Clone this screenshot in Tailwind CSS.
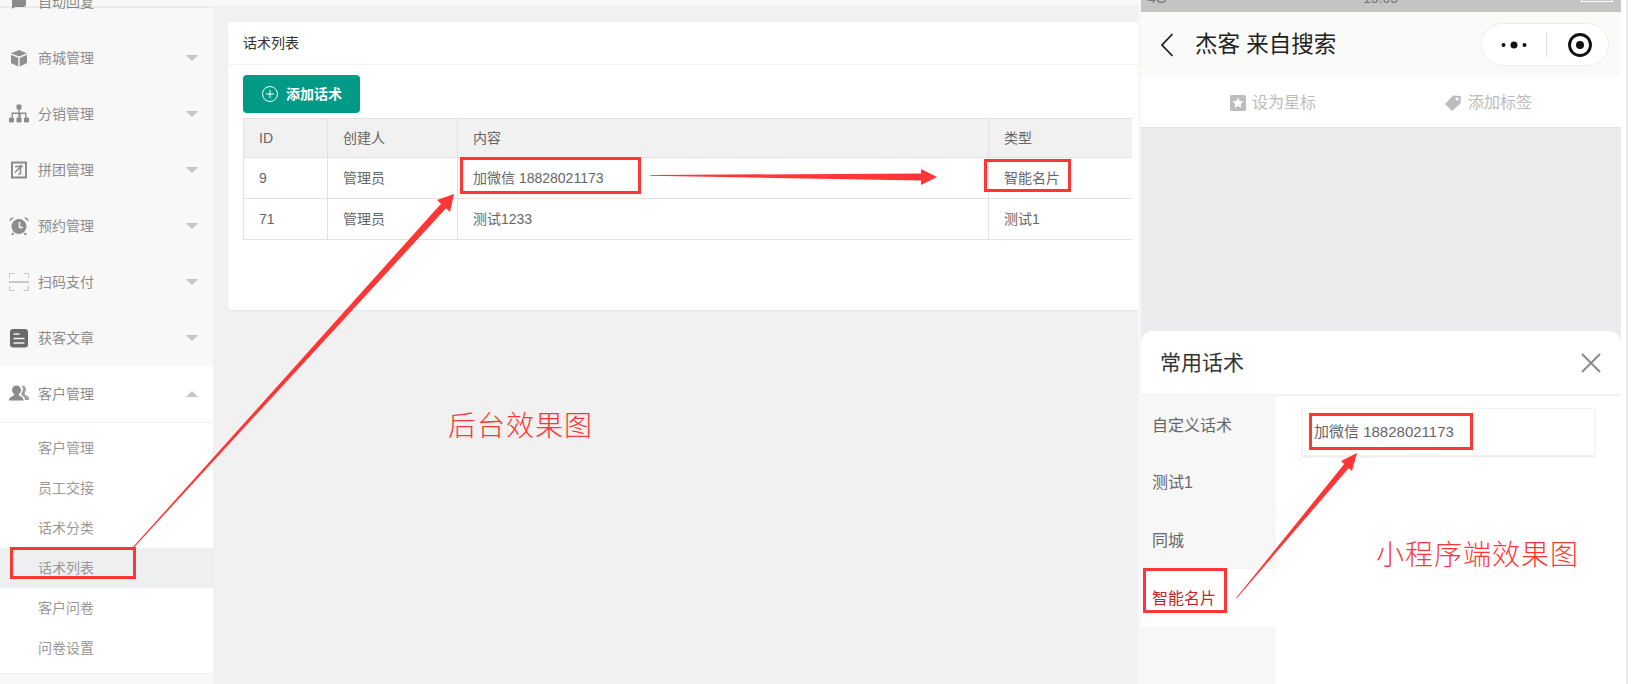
<!DOCTYPE html>
<html lang="zh-CN">
<head>
    <meta charset="UTF-8">
    <title>话术列表</title>
    <script src="https://cdn.jsdelivr.net/npm/@tailwindcss/browser@4"></script>
</head>
<body class="bg-white font-['Liberation_Sans','Noto_Sans_CJK_SC',sans-serif]">
<div class="relative flex h-[684px] w-[1633px] overflow-hidden">

    <!-- Sidebar -->
    <aside class="relative h-full w-[213px] shrink-0 overflow-hidden bg-[#f8f8f8] text-sm text-[#8c8c8c]">
        <div class="mt-[-26px] flex h-14 items-center pl-[9px]">
            <svg class="mr-[9px] h-5 w-5" viewBox="0 0 20 20"><path d="M3 4h14v8a3 3 0 0 1-3 3H6l-3 2z" fill="#8c8c8c"/></svg>
            <span>自动回复</span>
        </div>
        <div class="flex h-14 items-center pl-[9px]">
            <svg class="mr-[9px] h-5 w-5" viewBox="0 0 20 20"><path d="M10 2l8 3.200-8 3.400-8-3.400z" fill="#909090"/><path d="M2 6.800l7.300 3.100V18.500L2 15z" fill="#909090"/><path d="M18 6.800l-7.300 3.100V18.500L18 15z" fill="#909090"/></svg>
            <span>商城管理</span>
            <i class="mr-[15px] ml-auto h-0 w-0 border-x-[6px] border-t-[6px] border-x-transparent border-t-[#c4c4c4]"></i>
        </div>
        <div class="flex h-14 items-center pl-[9px]">
            <svg class="mr-[9px] h-5 w-5" viewBox="0 0 20 20" fill="#8c8c8c"><rect x="7.500" y="0.500" width="5" height="5" rx="1"/><rect x="0" y="13.500" width="5" height="5" rx="1"/><rect x="7.500" y="13.500" width="5" height="5" rx="1"/><rect x="15" y="13.500" width="5" height="5" rx="1"/><path d="M9.300 5h1.400v3.500h6.800v5h-1.400V10h-4.400v3.500H9.300V10H3.900v3.500H2.500v-5h6.800z"/></svg>
            <span>分销管理</span>
            <i class="mr-[15px] ml-auto h-0 w-0 border-x-[6px] border-t-[6px] border-x-transparent border-t-[#c4c4c4]"></i>
        </div>
        <div class="flex h-14 items-center pl-[9px]">
            <svg class="mr-[9px] h-5 w-5" viewBox="0 0 20 20" fill="none" stroke="#8c8c8c"><rect x="3" y="2.500" width="14" height="15" stroke-width="2"/><path d="M6 6.500h8M11.500 4.500v9l-2 1M11 7.500l-5 5" stroke-width="1.500"/></svg>
            <span>拼团管理</span>
            <i class="mr-[15px] ml-auto h-0 w-0 border-x-[6px] border-t-[6px] border-x-transparent border-t-[#c4c4c4]"></i>
        </div>
        <div class="flex h-14 items-center pl-[9px]">
            <svg class="mr-[9px] h-5 w-5" viewBox="0 0 20 20"><circle cx="10" cy="10.500" r="7.500" fill="#8c8c8c"/><path d="M0.500 5.500a3.500 3.500 0 0 1 4.500-3.800zM19.500 5.500a3.500 3.500 0 0 0-4.500-3.800z" fill="#8c8c8c"/><path d="M4.500 17l-1.500 2M15.500 17l1.500 2" stroke="#8c8c8c" stroke-width="2"/><path d="M10.500 6v5.500H14" fill="none" stroke="#f8f8f8" stroke-width="1.500"/></svg>
            <span>预约管理</span>
            <i class="mr-[15px] ml-auto h-0 w-0 border-x-[6px] border-t-[6px] border-x-transparent border-t-[#c4c4c4]"></i>
        </div>
        <div class="flex h-14 items-center pl-[9px]">
            <svg class="mr-[9px] h-5 w-5" viewBox="0 0 20 20" fill="none" stroke="#c4c4c4"><path d="M0.500 6V1.500h5M14.500 1.500h5V6M0.500 14v4.500h5M14.500 18.500h5V14"/><path d="M0 10h20" stroke="#a8a8a8" stroke-width="1.200"/></svg>
            <span>扫码支付</span>
            <i class="mr-[15px] ml-auto h-0 w-0 border-x-[6px] border-t-[6px] border-x-transparent border-t-[#c4c4c4]"></i>
        </div>
        <div class="flex h-14 items-center pl-[9px]">
            <svg class="mr-[9px] h-5 w-5" viewBox="0 0 20 20"><rect x="1" y="1" width="18" height="18.500" rx="3" fill="#6b6b6b"/><path d="M4.500 6h6M4.500 10.500h11M4.500 15h11" stroke="#f4f4f4" stroke-width="1.600"/></svg>
            <span>获客文章</span>
            <i class="mr-[15px] ml-auto h-0 w-0 border-x-[6px] border-t-[6px] border-x-transparent border-t-[#c4c4c4]"></i>
        </div>
        <div class="flex h-14 items-center bg-white pl-[9px]">
            <svg class="mr-[9px] h-5 w-5" viewBox="0 0 20 20" fill="#8c8c8c"><path d="M13 1.500a4 4 0 0 1 3 6.800c-.7 1-.5 2 .5 2.700l2.500 1.500c1 .7 1 2 1 3.500h-4c0-2-1-3.200-3-4.500-1-.7-1-2-.3-3a6 6 0 0 0 0-7z" fill="#a0a0a0"/><circle cx="7.500" cy="6" r="4.500"/><path d="M5.500 10h4c.2 1 .6 1.600 2 2.300 2 1 3 2 3 4.200H0c0-2.200 1-3.200 3.500-4.200 1.400-.7 1.800-1.300 2-2.300z"/></svg>
            <span>客户管理</span>
            <i class="mr-[15px] ml-auto h-0 w-0 border-x-[6px] border-b-[6px] border-x-transparent border-b-[#c4c4c4]"></i>
        </div>
        <ul class="border-y border-[#eeeeee] bg-white py-[5px] text-[#999999]">
            <li class="flex h-10 items-center pl-[38px]">客户管理</li>
            <li class="flex h-10 items-center pl-[38px]">员工交接</li>
            <li class="flex h-10 items-center pl-[38px]">话术分类</li>
            <li class="flex h-10 items-center bg-[#eeeff1] pl-[38px]">话术列表</li>
            <li class="flex h-10 items-center pl-[38px]">客户问卷</li>
            <li class="flex h-10 items-center pl-[38px]">问卷设置</li>
        </ul>
        <div class="absolute top-[6px] left-0 h-[2px] w-full bg-black/5"></div>
    </aside>

    <!-- Main content -->
    <main class="w-[925px] shrink-0 overflow-hidden bg-[#f1f1f1]">
        <div class="h-[7px] border-b border-[#eeeeee] bg-[#f7f7f7]"></div>
        <section class="mt-[15px] ml-[15px] h-[288px] w-[910px] rounded-t-sm rounded-bl-sm bg-white shadow-[0_1px_2px_rgba(0,0,0,0.05)]">
            <div class="flex h-[43px] items-center border-b border-[#f4f4f4] pl-[15px] text-sm text-[#333333]">话术列表</div>
            <div class="pt-[10px] pr-[5px] pl-[15px]">
                <button class="flex h-[38px] w-[117px] items-center rounded-sm bg-[#009a87] pl-[19px] text-sm font-bold text-white">
                    <svg class="mr-2 h-4 w-4" viewBox="0 0 16 16" fill="none" stroke="#ffffff" stroke-width="1"><circle cx="8" cy="8" r="7.500"/><path d="M8 4v8M4 8h8"/></svg>
                    添加话术
                </button>
                <table class="mt-[5px] w-[889px] table-fixed border-collapse text-sm text-[#666666]">
                    <colgroup>
                        <col class="w-[84px]"><col class="w-[130px]"><col class="w-[531px]"><col>
                    </colgroup>
                    <thead>
                        <tr class="h-[39px] bg-[#f1f1f1] text-left">
                            <th class="border border-[#e2e2e2] pl-[15px] font-normal">ID</th>
                            <th class="border border-[#e2e2e2] pl-[15px] font-normal">创建人</th>
                            <th class="border border-[#e2e2e2] pl-[15px] font-normal">内容</th>
                            <th class="border border-r-0 border-[#e2e2e2] pl-[15px] font-normal">类型</th>
                        </tr>
                    </thead>
                    <tbody>
                        <tr class="h-[41px]">
                            <td class="border border-[#e2e2e2] pl-[15px]">9</td>
                            <td class="border border-[#e2e2e2] pl-[15px]">管理员</td>
                            <td class="border border-[#e2e2e2] pl-[15px]">加微信 18828021173</td>
                            <td class="border border-r-0 border-[#e2e2e2] pl-[15px]">智能名片</td>
                        </tr>
                        <tr class="h-[41px]">
                            <td class="border border-[#e2e2e2] pl-[15px]">71</td>
                            <td class="border border-[#e2e2e2] pl-[15px]">管理员</td>
                            <td class="border border-[#e2e2e2] pl-[15px]">测试1233</td>
                            <td class="border border-r-0 border-[#e2e2e2] pl-[15px]">测试1</td>
                        </tr>
                    </tbody>
                </table>
            </div>
        </section>
    </main>

    <div class="w-[3px] shrink-0 bg-[#f7f7f7]"></div>

    <!-- Pasted phone screenshot -->
    <div class="flex h-full w-[480px] shrink-0 flex-col bg-[#ebebed]">
        <div class="relative h-3 overflow-hidden bg-[#c4c4c4] text-sm leading-none text-[#777777]">
            <span class="absolute top-[-9px] left-[7px]">4G</span>
            <span class="absolute top-[-9px] left-[222px]">15:05</span>
            <span class="absolute top-[-12px] right-[8px] h-[14px] w-[32px] border border-white"></span>
        </div>
        <div class="flex h-[65px] items-center bg-[#fafaf8] pr-3 pl-5">
            <svg class="mr-[22px] h-6 w-3" viewBox="0 0 12 24" fill="none" stroke="#222222" stroke-width="1.800"><path d="M11.500 1L1 12l10.500 11"/></svg>
            <span class="text-[22.500px] text-[#222222]">杰客 来自搜索</span>
            <div class="ml-auto flex h-[43px] w-[128px] items-center rounded-full border border-[#eeeeee] bg-white">
                <svg class="ml-[19px] h-2 w-[26px]" viewBox="0 0 26 8" fill="#111111"><circle cx="2.500" cy="4" r="2"/><circle cx="13" cy="4" r="3.500"/><circle cx="23.500" cy="4" r="2"/></svg>
                <div class="ml-[19px] h-[25px] w-px bg-[#dddddd]"></div>
                <svg class="ml-[21px] h-6 w-6" viewBox="0 0 24 24"><circle cx="12" cy="12" r="10.500" fill="none" stroke="#111111" stroke-width="2.800"/><circle cx="12" cy="12" r="4" fill="#111111"/></svg>
            </div>
        </div>
        <div class="flex h-[51px] items-center border-b border-[#e2e2e2] bg-white pt-[2px] text-base text-[#bbbbbb]">
            <svg class="mr-[6px] ml-[89px] h-4 w-4" viewBox="0 0 16 16"><rect width="16" height="16" rx="1.500" fill="#bdbdbd"/><path d="M8 2.500l1.700 3.500 3.800.5-2.800 2.600.7 3.800L8 11l-3.400 1.900.7-3.800-2.800-2.600 3.800-.5z" fill="#ffffff"/></svg>
            <span>设为星标</span>
            <svg class="mr-[7px] ml-[129px] h-4 w-4" viewBox="0 0 16 16"><path d="M0 9l8-8.500 8 .5-.5 7.500L7 16z" fill="#bdbdbd"/><circle cx="12" cy="4" r="1.500" fill="#ffffff"/></svg>
            <span>添加标签</span>
        </div>
        <div class="h-[203px]"></div>
        <div class="flex min-h-0 flex-1 flex-col rounded-t-[12px] bg-white">
            <div class="flex h-[65px] shrink-0 items-center justify-between border-b-2 border-[#f3f3f3] pr-5 pl-[19px]">
                <span class="text-[21px] text-[#333333]">常用话术</span>
                <svg class="h-5 w-5" viewBox="0 0 20 20" fill="none" stroke="#8a8a8a" stroke-width="2"><path d="M1 1l18 18M19 1L1 19"/></svg>
            </div>
            <div class="flex min-h-0 flex-1">
                <div class="flex w-[135px] shrink-0 flex-col bg-[#f7f7f7] text-base text-[#666666]">
                    <div class="flex h-[58px] items-center pt-[1px] pl-[11px]">自定义话术</div>
                    <div class="flex h-[58px] items-center pl-[11px]">测试1</div>
                    <div class="flex h-[57px] items-center pl-[11px]">同城</div>
                    <div class="flex h-[58px] items-center bg-white pt-[2px] pl-[11px] text-[#c8232c]">智能名片</div>
                </div>
                <div class="flex-1 pt-3 pr-[26px] pl-[26px]">
                    <div class="flex h-12 items-center border border-[#f2f2f2] pt-[1px] pl-[11px] text-[15px] text-[#666666] shadow-[0_1px_2px_rgba(0,0,0,0.1)]">加微信 18828021173</div>
                </div>
            </div>
        </div>
    </div>

    <div class="flex-1 bg-white pl-[5px]">
        <div class="h-full w-[2px] bg-[#e8e8e8]"></div>
    </div>

    <!-- Red annotations drawn over the screenshot -->
    <svg class="pointer-events-none absolute inset-0 h-[684px] w-[1633px]" viewBox="0 0 1633 684">
        <g fill="none" stroke="#ff3636" stroke-width="3">
            <rect x="11.500" y="548.500" width="123" height="29"/>
            <rect x="461.500" y="158.500" width="178" height="34"/>
            <rect x="985.500" y="160.500" width="84" height="30"/>
            <rect x="1310.500" y="414.500" width="161" height="34"/>
            <rect x="1144.500" y="569.500" width="81" height="42"/>
        </g>
        <g fill="#ff3636">
            <polygon points="133,547 441,203.700 437,200 454,194 450,212 446,208.300 134,547.500"/>
            <polygon points="650,175 921,173.500 921,169 937,177 921,185 921,180.500 650,175.700"/>
            <polygon points="1236,598 1344.200,464.100 1341,461 1357,453 1352,471 1348.800,467.900 1236.600,598.500"/>
        </g>
    </svg>
    <span class="absolute top-[407px] left-[448px] text-[28px] leading-[40px] font-light tracking-[1px] text-[#ff3636]">后台效果图</span>
    <span class="absolute top-[536px] left-[1376px] text-[28px] leading-[40px] font-light tracking-[1px] text-[#ff3636]">小程序端效果图</span>
</div>
</body>
</html>
